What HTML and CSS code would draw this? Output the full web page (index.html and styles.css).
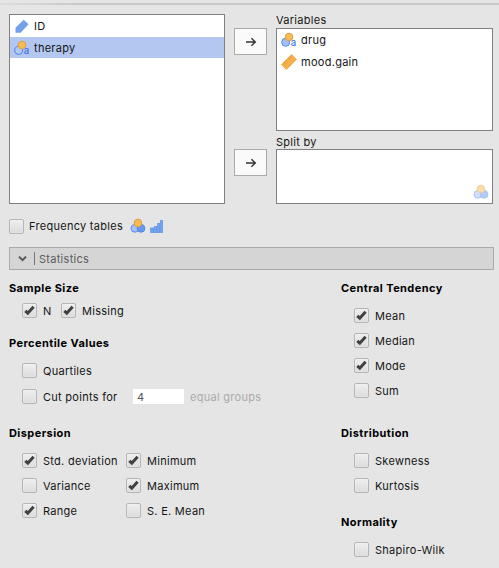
FILE: index.html
```html
<!DOCTYPE html>
<html lang="en">
<head>
<meta charset="utf-8">
<title>Descriptives</title>
<link rel="stylesheet" href="styles.css">
</head>
<body>
<svg class="defs" width="0" height="0" aria-hidden="true">
  <symbol id="check" viewBox="0 0 11 11"><path d="M1.3 5.9 3.8 8.2 9.6 1.7" fill="none" stroke="#404040" stroke-width="3"/></symbol>
  <symbol id="arrow" viewBox="0 0 12 10"><path d="M1 5H10.2M6.4 1.3 10.3 5 6.4 8.7" fill="none" stroke="#333" stroke-width="1.4"/></symbol>
  <symbol id="nominal" viewBox="0 0 16 16"><circle cx="4.9" cy="10.3" r="3.9" fill="#a4c0f8" stroke="#5f8ee8"/><circle cx="11" cy="10.3" r="3.9" fill="#6799ee" stroke="#5588e6"/><circle cx="7.9" cy="5" r="3.8" fill="#f8bc54" stroke="#dda03c"/></symbol>
</svg>
<div class="topline"></div>
<main class="panel">
  <section class="assign">
    <div class="list source">
      <div class="item"><svg class="icon" viewBox="0 0 16 16"><path d="M1.5 14.800V9.700L9.700 1.700 14.500 6.300 6.700 14.800Z" fill="#73a2ed"/></svg>ID</div>
      <div class="item selected"><svg class="icon" viewBox="0 0 16 16"><circle cx="4.7" cy="10.3" r="4" fill="none" stroke="#5588ec" stroke-width="1.1"/><circle cx="8" cy="5" r="3.8" fill="#f8bc54" stroke="#dda03c"/><text class="letter" x="9.7" y="14.3">a</text></svg>therapy</div>
    </div>
    <div class="buttons">
      <button class="move"><svg width="12" height="10"><use href="#arrow"/></svg></button>
      <button class="move"><svg width="12" height="10"><use href="#arrow"/></svg></button>
    </div>
    <div class="targets">
      <div class="title">Variables</div>
      <div class="list variables">
        <div class="item"><svg class="icon" viewBox="0 0 16 16"><circle cx="4.7" cy="10.3" r="4" fill="#a4c0f8" stroke="#5588ec"/><circle cx="8" cy="5" r="3.8" fill="#f8bc54" stroke="#dda03c"/><text class="letter" x="9.7" y="14.3">a</text></svg>drug</div>
        <div class="item"><svg class="icon" viewBox="0 0 16 16"><path d="M.5 10.600 10.600.5 15.500 5.400 5.400 15.500Z" fill="#f5b04b" stroke="#e99c35" stroke-width=".7"/><path d="M3.2 8.3l1.8 1.8M5.2 6.3l1.3 1.3M7.2 4.3l1.8 1.8M9.2 2.3l1.3 1.3" stroke="#d68a2c" stroke-width=".8"/></svg>mood.gain</div>
      </div>
      <div class="title lower">Split by</div>
      <div class="list split"><svg class="faded" width="16" height="16"><use href="#nominal"/></svg></div>
    </div>
  </section>

  <div class="frequency">
    <label class="opt"><i class="box"></i>Frequency tables</label>
    <svg class="nom" width="16" height="16"><use href="#nominal"/></svg>
    <svg width="13" height="14" viewBox="0 0 13 14"><path d="M0 14V8.500H4V7H7V4H10V1H13V14Z" fill="#73a2ed"/><path d="M3.500 8.500V14M6.700 7V14M9.800 4V14" stroke="#5b8fe6" stroke-width=".6"/></svg>
  </div>

  <div class="section-bar"><svg width="9" height="7" viewBox="0 0 9 7"><path d="M1 1.600 4.500 5.100 8 1.600" fill="none" stroke="#555" stroke-width="2"/></svg><span class="rule"></span>Statistics</div>

  <section class="stats">
    <div class="column">
      <h2 class="first">Sample Size</h2>
      <div class="row sample"><label class="opt n"><i class="box"><svg><use href="#check"/></svg></i>N</label><label class="opt"><i class="box"><svg><use href="#check"/></svg></i>Missing</label></div>
      <h2 class="percentile">Percentile Values</h2>
      <div class="row"><label class="opt"><i class="box"></i>Quartiles</label></div>
      <div class="row cut"><label class="opt"><i class="box"></i>Cut points for</label><span class="field">4</span><span class="muted">equal groups</span></div>
      <h2 class="dispersion">Dispersion</h2>
      <div class="pairs">
        <label class="opt"><i class="box"><svg><use href="#check"/></svg></i>Std. deviation</label><label class="opt"><i class="box"><svg><use href="#check"/></svg></i>Minimum</label>
        <label class="opt"><i class="box"></i>Variance</label><label class="opt"><i class="box"><svg><use href="#check"/></svg></i>Maximum</label>
        <label class="opt"><i class="box"><svg><use href="#check"/></svg></i>Range</label><label class="opt"><i class="box"></i>S. E. Mean</label>
      </div>
    </div>
    <div class="column">
      <h2 class="first">Central Tendency</h2>
      <div class="stack">
        <label class="opt"><i class="box"><svg><use href="#check"/></svg></i>Mean</label>
        <label class="opt"><i class="box"><svg><use href="#check"/></svg></i>Median</label>
        <label class="opt"><i class="box"><svg><use href="#check"/></svg></i>Mode</label>
        <label class="opt"><i class="box"></i>Sum</label>
      </div>
      <h2 class="distribution">Distribution</h2>
      <div class="stack">
        <label class="opt"><i class="box"></i>Skewness</label>
        <label class="opt"><i class="box"></i>Kurtosis</label>
      </div>
      <h2 class="normality">Normality</h2>
      <div class="stack"><label class="opt"><i class="box"></i>Shapiro-Wilk</label></div>
    </div>
  </section>
</main>
</body>
</html>
```

FILE: styles.css
```css
* { box-sizing: border-box; }
body {
  margin: 0;
  height: 568px;
  overflow: hidden;
  background: #e5e5e5;
  color: #151515;
  font: 11px/16px Inter, "Liberation Sans", sans-serif;
  letter-spacing: 0.28px;
}
svg { display: block; flex: none; }
.defs { position: absolute; }
.topline {
  height: 2px;
  margin-top: 3px;
  background: linear-gradient(90deg, #dedede, #cacaca 15%, #cacaca);
}
.panel { padding: 9px 5px 0 9px; }

.assign { display: flex; height: 190px; }
.list { background: #fff; border: 1px solid #808080; }
.source { width: 216px; }
.item { display: flex; align-items: center; height: 22px; padding-left: 4px; }
.item.selected { height: 21px; background: #b3c7f1; }
.icon { width: 16px; height: 16px; margin-right: 4px; overflow: visible; }
.letter { font: 500 9.5px Inter, sans-serif; letter-spacing: 0; fill: #3f6fe2; }
.buttons { width: 33px; margin: 14px 9px 0; }
.move {
  display: flex;
  align-items: center;
  justify-content: center;
  width: 33px;
  height: 27px;
  margin: 0 0 94px;
  padding: 0;
  background: #fafafa;
  border: 1px solid #aaa;
}
.targets { width: 217px; }
.title { height: 14px; line-height: 13px; }
.title.lower { line-height: 15px; }
.variables { height: 103px; margin-bottom: 4px; }
.split { display: flex; align-items: flex-end; justify-content: flex-end; height: 55px; padding: 0 3px 3px 0; }
.faded { opacity: .5; }

.opt { display: flex; align-items: center; white-space: nowrap; }
.box {
  display: grid;
  place-items: center;
  flex: none;
  width: 15px;
  height: 15px;
  margin-right: 6px;
  border: 1px solid #b5b5b5;
  border-radius: 2px;
  background: linear-gradient(#eee, #dcdcdc);
  box-shadow: inset 0 0 0 1px rgba(255, 255, 255, .2);
}
.box svg { width: 11px; height: 11px; }

.frequency { display: flex; align-items: center; height: 16px; margin-top: 14px; }
.frequency .box { margin-right: 5px; }
.nom { margin: 0 4px 0 7px; }
.section-bar {
  display: flex;
  align-items: center;
  height: 23px;
  margin-top: 13px;
  padding-left: 8px;
  background: #d5d5d5;
  border: 1px solid #aaa;
  color: #5c5c5c;
}
.rule { width: 1px; height: 13px; margin: 0 4px 0 7px; background: #777; }

.stats { display: grid; grid-template-columns: 332px 1fr; }
h2 { height: 16px; margin: 0; font-size: 11px; line-height: 16px; font-weight: 700; letter-spacing: 0.42px; color: #000; }
.first { margin-top: 10px; }
.row { display: flex; align-items: center; height: 25px; padding-left: 13px; }
.sample { margin-top: 2px; }
.n { width: 39px; }
.percentile { margin: 12px 0 7px; }
.cut { height: 27px; }
.cut .opt { width: 111px; }
.field { width: 51px; height: 15px; padding-left: 4px; margin-right: 6px; background: #fff; color: #555; line-height: 17px; }
.muted { color: #aaa; }
.dispersion { margin: 15px 0 7px; }
.pairs { display: grid; grid-template-columns: 104px 1fr; grid-auto-rows: 25px; padding-left: 13px; }
.stack { display: grid; grid-auto-rows: 25px; margin-top: 7px; padding-left: 13px; }
.distribution { margin-top: 22px; }
.normality { margin-top: 16px; }
```
